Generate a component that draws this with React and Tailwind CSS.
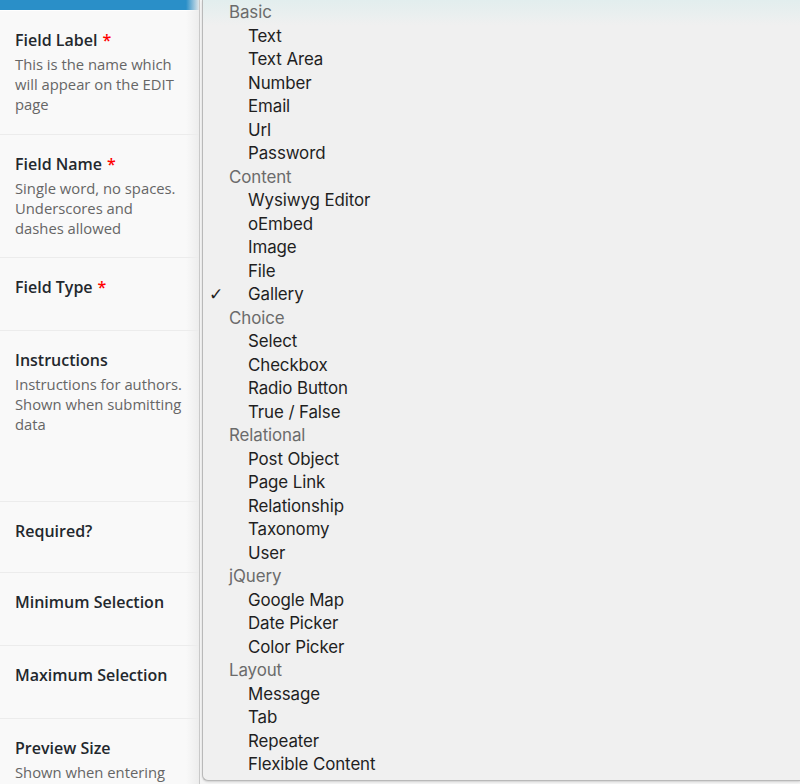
import React from "react";

const fields = [
  { label: "Field Label", required: true, help: "This is the name which will appear on the EDIT page", h: "h-[124px]" },
  { label: "Field Name", required: true, help: "Single word, no spaces. Underscores and dashes allowed", h: "h-[123px]" },
  { label: "Field Type", required: true, h: "h-[73px]" },
  { label: "Instructions", help: "Instructions for authors. Shown when submitting data", h: "h-[171px]" },
  { label: "Required?", h: "h-[71px]" },
  { label: "Minimum Selection", h: "h-[73px]" },
  { label: "Maximum Selection", h: "h-[73px]" },
  { label: "Preview Size", help: "Shown when entering data", h: "h-[80px]" },
];

const groups = [
  { name: "Basic", items: ["Text", "Text Area", "Number", "Email", "Url", "Password"] },
  { name: "Content", items: ["Wysiwyg Editor", "oEmbed", "Image", "File", "Gallery"] },
  { name: "Choice", items: ["Select", "Checkbox", "Radio Button", "True / False"] },
  { name: "Relational", items: ["Post Object", "Page Link", "Relationship", "Taxonomy", "User"] },
  { name: "jQuery", items: ["Google Map", "Date Picker", "Color Picker"] },
  { name: "Layout", items: ["Message", "Tab", "Repeater", "Flexible Content"] },
];

const selected = "Gallery";

function FieldLabels() {
  return (
    <div className="relative w-[200px] shrink-0 overflow-hidden bg-[#f9f9f9] font-['Open_Sans',sans-serif]">
      <div className="h-[10px] bg-[#2a8fc8]" />
      <div className="h-px bg-white" />
      {fields.map((f) => (
        <div key={f.label} className={`${f.h} border-b border-[#ececec] pl-[15px] pr-[17px] pt-[19px]`}>
          <div className="text-[16px] font-semibold leading-[20px] text-[#23282d]">
            {f.label}
            {f.required && <span className="ml-[5px] text-[#f00]">*</span>}
          </div>
          {f.help && (
            <p className="mt-[4px] text-[14.8px] leading-[20px] text-[#666]">{f.help}</p>
          )}
        </div>
      ))}
      {/* soft shade where the open menu overlaps */}
      <div className="pointer-events-none absolute inset-y-0 right-0 w-[14px] bg-gradient-to-r from-transparent to-[#ececec]" />
      <div className="absolute inset-y-0 right-0 w-px bg-[#c9c9c9]" />
    </div>
  );
}

function TypeMenu() {
  return (
    <div className="flex-1 pl-[2px] pb-[3px] bg-[#f4f4f4]">
      <div className="relative h-full overflow-hidden rounded-bl-[6px] border-b border-l border-[#b9b9b9] bg-[#f0f0f0] font-['Inter',sans-serif] shadow-[0_1px_2px_rgba(0,0,0,0.15)]">
        <div className="pointer-events-none absolute inset-x-0 top-0 h-[26px] bg-gradient-to-b from-[#e2eeee] to-[#f0f0f0]" />
        <ul className="relative pt-[1px] text-[16.9px] leading-[23.5px] tracking-[-0.1px]">
          {groups.map((g) => (
            <React.Fragment key={g.name}>
              <li className="pl-[26px] text-[#6b6b6b]">{g.name}</li>
              {g.items.map((it) => (
                <li key={it} className="relative pl-[45px] text-[#1f1f1f]">
                  {it === selected && (
                    <span className="absolute left-[6px] top-0 font-['DejaVu_Sans',sans-serif] text-[17px] text-[#1f1f1f]">✓</span>
                  )}
                  {it}
                </li>
              ))}
            </React.Fragment>
          ))}
        </ul>
      </div>
    </div>
  );
}

export default function App() {
  return (
    <div className="flex h-[784px] w-[800px] overflow-hidden bg-[#f4f4f4]">
      <FieldLabels />
      <TypeMenu />
    </div>
  );
}
